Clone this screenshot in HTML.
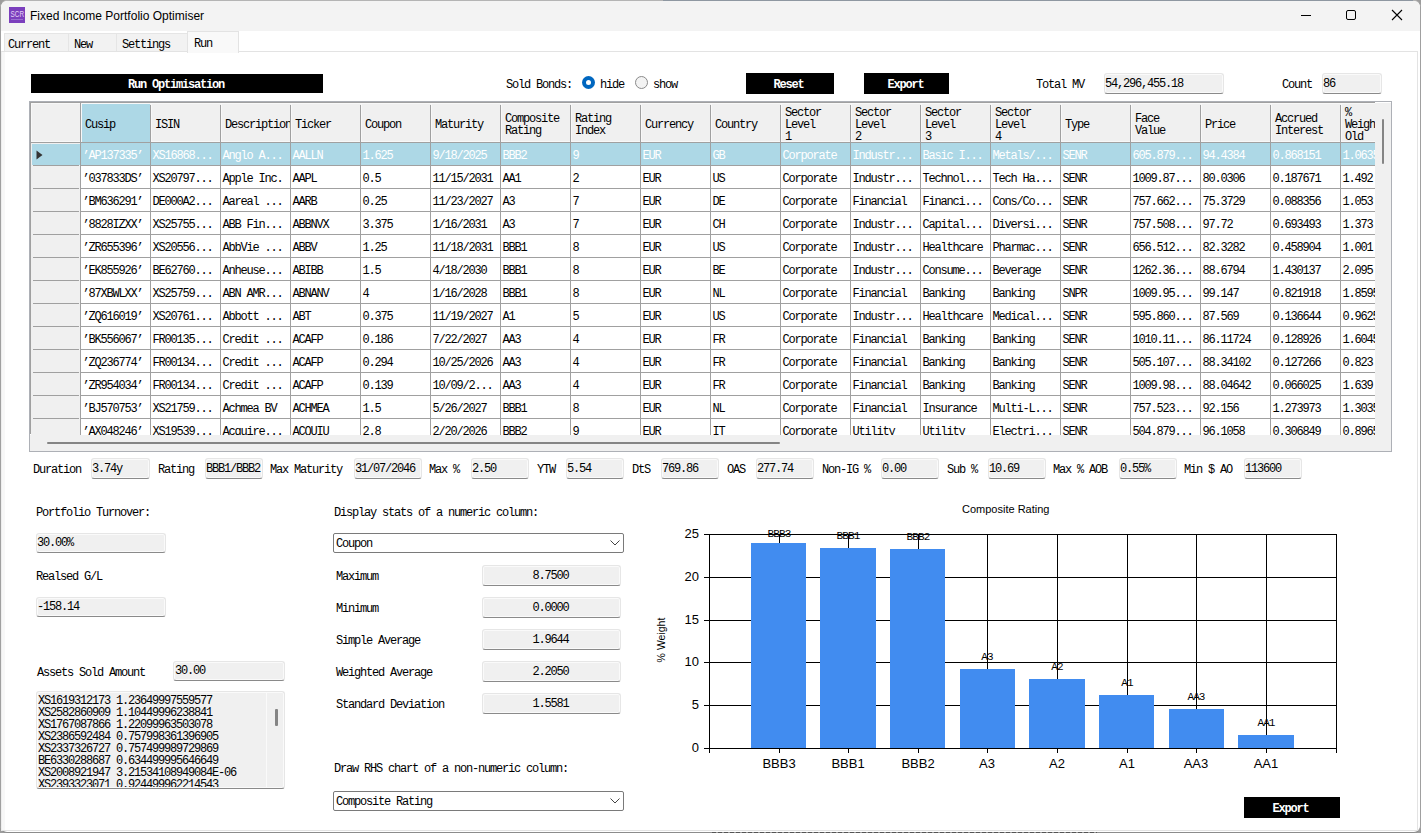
<!DOCTYPE html><html><head><meta charset='utf-8'><style>
*{box-sizing:border-box}
html,body{margin:0;padding:0}
body{width:1421px;height:833px;overflow:hidden;position:relative;background:#9c9c9c;font-family:'Liberation Mono', monospace;font-size:12px;color:#000}
.a{position:absolute}
.t{position:absolute;white-space:pre;font-family:'Liberation Mono', monospace;font-size:12px;letter-spacing:-1.2px;line-height:12px}
.s{position:absolute;white-space:pre;font-family:'Liberation Sans', sans-serif}
.btn{position:absolute;background:#000;color:#fff;font-family:'Liberation Mono', monospace;font-weight:bold;font-size:12px;letter-spacing:-1.2px;line-height:12px;text-align:center}
.tb{position:absolute;background:#f0f0f0;border:1px solid #e6e6e6;border-bottom:1px solid #8a8a8a;border-radius:3px;box-shadow:inset 0 0 0 1px #fafafa}
.gl{position:absolute;background:#a0a0a0}
</style></head><body>
<div class='a' style='left:0;top:0;width:1421px;height:833px;border:1px solid #a0a0a0;border-top-color:#b4b4b4;border-bottom-color:#8c8c8c;border-radius:7px;background:#fff;overflow:hidden'><div class='a' style='left:0;top:0;width:1419px;height:30px;background:#f3f3f3'></div></div>
<div class='a' style='left:663px;top:0;width:750px;height:1px;background:#8e97a1'></div>
<div class='a' style='left:9px;top:7px;width:16px;height:16px;background:#7b3fbd'></div>
<svg class='a' style='left:9px;top:7px' width='16' height='16'><text x='1.5' y='9.5' textLength='13.5' lengthAdjust='spacingAndGlyphs' font-family='Liberation Sans' font-size='9.5' fill='#e3d3f5'>SCR</text></svg>
<div class='a' style='left:11px;top:19px;width:12px;height:1px;background:#9a70d0'></div>
<div class='s' style='left:30px;top:9px;font-size:12px;line-height:14px'>Fixed Income Portfolio Optimiser</div>
<div class='a' style='left:1301px;top:15px;width:10px;height:1px;background:#000'></div>
<div class='a' style='left:1346px;top:10px;width:10px;height:10px;border:1px solid #000;border-radius:2px'></div>
<svg class='a' style='left:1391px;top:9px' width='12' height='12'><path d='M1 1L11 11M11 1L1 11' stroke='#000' stroke-width='1.1'/></svg>
<div class='a' style='left:4px;top:33px;width:65px;height:19px;background:#f2f2f2;border:1px solid #e5e5e5;border-bottom:none'></div>
<div class='t' style='left:8px;top:39px'>Current</div>
<div class='a' style='left:68px;top:33px;width:49px;height:19px;background:#f2f2f2;border:1px solid #e5e5e5;border-bottom:none'></div>
<div class='t' style='left:74px;top:39px'>New</div>
<div class='a' style='left:116px;top:33px;width:72px;height:19px;background:#f2f2f2;border:1px solid #e5e5e5;border-bottom:none'></div>
<div class='t' style='left:122px;top:39px'>Settings</div>
<div class='a' style='left:1px;top:51px;width:1417px;height:780px;border:1px solid #e3e3e3;border-left:1px solid #eeeeee'></div>
<div class='a' style='left:2px;top:52px;width:3px;height:778px;background:#f8f8f8'></div>
<div class='a' style='left:187px;top:31px;width:52px;height:22px;background:#f9f9f9;border:1px solid #e3e3e3;border-bottom:none'></div>
<div class='t' style='left:194px;top:38px'>Run</div>
<div class='btn' style='left:31px;top:74px;width:292px;height:19px;padding-top:5px;padding-right:2px'>Run Optimisation</div>
<div class='t' style='left:506px;top:79px'>Sold Bonds:</div>
<div class='a' style='left:582px;top:76px;width:13px;height:13px;border-radius:50%;background:#0067c0'></div>
<div class='a' style='left:586px;top:80px;width:5px;height:5px;border-radius:50%;background:#fff'></div>
<div class='t' style='left:600px;top:79px'>hide</div>
<div class='a' style='left:635px;top:76px;width:13px;height:13px;border-radius:50%;background:#f3f3f3;border:1px solid #8a8a8a'></div>
<div class='t' style='left:653px;top:79px'>show</div>
<div class='btn' style='left:746px;top:73px;width:88px;height:21px;padding-top:6px;padding-right:3px'>Reset</div>
<div class='btn' style='left:864px;top:73px;width:85px;height:21px;padding-top:6px;padding-right:2px'>Export</div>
<div class='t' style='left:1036px;top:79px'>Total MV</div>
<div class='tb' style='left:1104px;top:73px;width:120px;height:21px'></div>
<div class='t' style='left:1105px;top:78px'>54,296,455.18</div>
<div class='t' style='left:1282px;top:79px'>Count</div>
<div class='tb' style='left:1322px;top:73px;width:60px;height:21px'></div>
<div class='t' style='left:1323px;top:78px'>86</div>
<div class='a' style='left:29px;top:101px;width:1363px;height:351px;border:1px solid #adb0b6;background:#fff'></div>
<div class='gl' style='left:30px;top:102px;width:1345px;height:1px'></div>
<div class='gl' style='left:30px;top:102px;width:1px;height:332px'></div>
<div class='a' style='left:31px;top:103px;width:1344px;height:332px;overflow:hidden'>
<div class='a' style='left:0;top:0;width:1400px;height:39px;background:#f0f0f0'></div>
<div class='a' style='left:0px;top:39px;width:49px;height:300px;background:#f0f0f0'></div>
<div class='a' style='left:0px;top:0px;width:1400px;height:1px;background:#f8f8f8'></div>
<div class='a' style='left:0px;top:38px;width:1400px;height:1px;background:#f8f8f8'></div>
<div class='a' style='left:50px;top:0px;width:1px;height:39px;background:#f8f8f8'></div>
<div class='a' style='left:120px;top:0px;width:1px;height:39px;background:#f8f8f8'></div>
<div class='a' style='left:190px;top:0px;width:1px;height:39px;background:#f8f8f8'></div>
<div class='a' style='left:260px;top:0px;width:1px;height:39px;background:#f8f8f8'></div>
<div class='a' style='left:330px;top:0px;width:1px;height:39px;background:#f8f8f8'></div>
<div class='a' style='left:400px;top:0px;width:1px;height:39px;background:#f8f8f8'></div>
<div class='a' style='left:470px;top:0px;width:1px;height:39px;background:#f8f8f8'></div>
<div class='a' style='left:540px;top:0px;width:1px;height:39px;background:#f8f8f8'></div>
<div class='a' style='left:610px;top:0px;width:1px;height:39px;background:#f8f8f8'></div>
<div class='a' style='left:680px;top:0px;width:1px;height:39px;background:#f8f8f8'></div>
<div class='a' style='left:750px;top:0px;width:1px;height:39px;background:#f8f8f8'></div>
<div class='a' style='left:820px;top:0px;width:1px;height:39px;background:#f8f8f8'></div>
<div class='a' style='left:890px;top:0px;width:1px;height:39px;background:#f8f8f8'></div>
<div class='a' style='left:960px;top:0px;width:1px;height:39px;background:#f8f8f8'></div>
<div class='a' style='left:1030px;top:0px;width:1px;height:39px;background:#f8f8f8'></div>
<div class='a' style='left:1100px;top:0px;width:1px;height:39px;background:#f8f8f8'></div>
<div class='a' style='left:1170px;top:0px;width:1px;height:39px;background:#f8f8f8'></div>
<div class='a' style='left:1240px;top:0px;width:1px;height:39px;background:#f8f8f8'></div>
<div class='a' style='left:1310px;top:0px;width:1px;height:39px;background:#f8f8f8'></div>
<div class='a' style='left:1380px;top:0px;width:1px;height:39px;background:#f8f8f8'></div>
<div class='a' style='left:0px;top:0px;width:1px;height:39px;background:#f8f8f8'></div>
<div class='a' style='left:51px;top:1px;width:68px;height:38px;background:#add8e6'></div>
<div class='a' style='left:50px;top:40px;width:1400px;height:22px;background:#add8e6'></div>
<div class='a' style='left:1px;top:41px;width:48px;height:21px;background:#add8e6'></div>
<div class='gl' style='left:49px;top:0px;width:1px;height:39px'></div>
<div class='gl' style='left:119px;top:2px;width:1px;height:37px'></div>
<div class='gl' style='left:189px;top:2px;width:1px;height:37px'></div>
<div class='gl' style='left:259px;top:2px;width:1px;height:37px'></div>
<div class='gl' style='left:329px;top:2px;width:1px;height:37px'></div>
<div class='gl' style='left:399px;top:2px;width:1px;height:37px'></div>
<div class='gl' style='left:469px;top:2px;width:1px;height:37px'></div>
<div class='gl' style='left:539px;top:2px;width:1px;height:37px'></div>
<div class='gl' style='left:609px;top:2px;width:1px;height:37px'></div>
<div class='gl' style='left:679px;top:2px;width:1px;height:37px'></div>
<div class='gl' style='left:749px;top:2px;width:1px;height:37px'></div>
<div class='gl' style='left:819px;top:2px;width:1px;height:37px'></div>
<div class='gl' style='left:889px;top:2px;width:1px;height:37px'></div>
<div class='gl' style='left:959px;top:2px;width:1px;height:37px'></div>
<div class='gl' style='left:1029px;top:2px;width:1px;height:37px'></div>
<div class='gl' style='left:1099px;top:2px;width:1px;height:37px'></div>
<div class='gl' style='left:1169px;top:2px;width:1px;height:37px'></div>
<div class='gl' style='left:1239px;top:2px;width:1px;height:37px'></div>
<div class='gl' style='left:1309px;top:2px;width:1px;height:37px'></div>
<div class='gl' style='left:1379px;top:2px;width:1px;height:37px'></div>
<div class='gl' style='left:0px;top:39px;width:1400px;height:1px'></div>
<div class='gl' style='left:49px;top:39px;width:1px;height:300px'></div>
<div class='gl' style='left:119px;top:39px;width:1px;height:300px'></div>
<div class='gl' style='left:189px;top:39px;width:1px;height:300px'></div>
<div class='gl' style='left:259px;top:39px;width:1px;height:300px'></div>
<div class='gl' style='left:329px;top:39px;width:1px;height:300px'></div>
<div class='gl' style='left:399px;top:39px;width:1px;height:300px'></div>
<div class='gl' style='left:469px;top:39px;width:1px;height:300px'></div>
<div class='gl' style='left:539px;top:39px;width:1px;height:300px'></div>
<div class='gl' style='left:609px;top:39px;width:1px;height:300px'></div>
<div class='gl' style='left:679px;top:39px;width:1px;height:300px'></div>
<div class='gl' style='left:749px;top:39px;width:1px;height:300px'></div>
<div class='gl' style='left:819px;top:39px;width:1px;height:300px'></div>
<div class='gl' style='left:889px;top:39px;width:1px;height:300px'></div>
<div class='gl' style='left:959px;top:39px;width:1px;height:300px'></div>
<div class='gl' style='left:1029px;top:39px;width:1px;height:300px'></div>
<div class='gl' style='left:1099px;top:39px;width:1px;height:300px'></div>
<div class='gl' style='left:1169px;top:39px;width:1px;height:300px'></div>
<div class='gl' style='left:1239px;top:39px;width:1px;height:300px'></div>
<div class='gl' style='left:1309px;top:39px;width:1px;height:300px'></div>
<div class='gl' style='left:1379px;top:39px;width:1px;height:300px'></div>
<div class='gl' style='left:50px;top:62px;width:1400px;height:1px'></div>
<div class='gl' style='left:2px;top:62px;width:46px;height:1px'></div>
<div class='gl' style='left:50px;top:85px;width:1400px;height:1px'></div>
<div class='gl' style='left:2px;top:85px;width:46px;height:1px'></div>
<div class='gl' style='left:50px;top:108px;width:1400px;height:1px'></div>
<div class='gl' style='left:2px;top:108px;width:46px;height:1px'></div>
<div class='gl' style='left:50px;top:131px;width:1400px;height:1px'></div>
<div class='gl' style='left:2px;top:131px;width:46px;height:1px'></div>
<div class='gl' style='left:50px;top:154px;width:1400px;height:1px'></div>
<div class='gl' style='left:2px;top:154px;width:46px;height:1px'></div>
<div class='gl' style='left:50px;top:177px;width:1400px;height:1px'></div>
<div class='gl' style='left:2px;top:177px;width:46px;height:1px'></div>
<div class='gl' style='left:50px;top:200px;width:1400px;height:1px'></div>
<div class='gl' style='left:2px;top:200px;width:46px;height:1px'></div>
<div class='gl' style='left:50px;top:223px;width:1400px;height:1px'></div>
<div class='gl' style='left:2px;top:223px;width:46px;height:1px'></div>
<div class='gl' style='left:50px;top:246px;width:1400px;height:1px'></div>
<div class='gl' style='left:2px;top:246px;width:46px;height:1px'></div>
<div class='gl' style='left:50px;top:269px;width:1400px;height:1px'></div>
<div class='gl' style='left:2px;top:269px;width:46px;height:1px'></div>
<div class='gl' style='left:50px;top:292px;width:1400px;height:1px'></div>
<div class='gl' style='left:2px;top:292px;width:46px;height:1px'></div>
<div class='gl' style='left:50px;top:315px;width:1400px;height:1px'></div>
<div class='gl' style='left:2px;top:315px;width:46px;height:1px'></div>
<div class='gl' style='left:50px;top:338px;width:1400px;height:1px'></div>
<div class='gl' style='left:2px;top:338px;width:46px;height:1px'></div>
<svg class='a' style='left:5px;top:47px' width='8' height='11'><path d='M0.5 0.5L6.5 5L0.5 9.5Z' fill='#333' /></svg>
<div class='a' style='left:50px;top:14px;width:69px;height:40px;overflow:hidden'><div class='t' style='left:4px;top:2px'>Cusip</div></div>
<div class='a' style='left:120px;top:14px;width:69px;height:40px;overflow:hidden'><div class='t' style='left:4px;top:2px'>ISIN</div></div>
<div class='a' style='left:190px;top:14px;width:69px;height:40px;overflow:hidden'><div class='t' style='left:4px;top:2px'>Description</div></div>
<div class='a' style='left:260px;top:14px;width:69px;height:40px;overflow:hidden'><div class='t' style='left:4px;top:2px'>Ticker</div></div>
<div class='a' style='left:330px;top:14px;width:69px;height:40px;overflow:hidden'><div class='t' style='left:4px;top:2px'>Coupon</div></div>
<div class='a' style='left:400px;top:14px;width:69px;height:40px;overflow:hidden'><div class='t' style='left:4px;top:2px'>Maturity</div></div>
<div class='a' style='left:470px;top:8px;width:69px;height:40px;overflow:hidden'><div class='t' style='left:4px;top:2px'>Composite<br>Rating</div></div>
<div class='a' style='left:540px;top:8px;width:69px;height:40px;overflow:hidden'><div class='t' style='left:4px;top:2px'>Rating<br>Index</div></div>
<div class='a' style='left:610px;top:14px;width:69px;height:40px;overflow:hidden'><div class='t' style='left:4px;top:2px'>Currency</div></div>
<div class='a' style='left:680px;top:14px;width:69px;height:40px;overflow:hidden'><div class='t' style='left:4px;top:2px'>Country</div></div>
<div class='a' style='left:750px;top:2px;width:69px;height:40px;overflow:hidden'><div class='t' style='left:4px;top:2px'>Sector<br>Level<br>1</div></div>
<div class='a' style='left:820px;top:2px;width:69px;height:40px;overflow:hidden'><div class='t' style='left:4px;top:2px'>Sector<br>Level<br>2</div></div>
<div class='a' style='left:890px;top:2px;width:69px;height:40px;overflow:hidden'><div class='t' style='left:4px;top:2px'>Sector<br>Level<br>3</div></div>
<div class='a' style='left:960px;top:2px;width:69px;height:40px;overflow:hidden'><div class='t' style='left:4px;top:2px'>Sector<br>Level<br>4</div></div>
<div class='a' style='left:1030px;top:14px;width:69px;height:40px;overflow:hidden'><div class='t' style='left:4px;top:2px'>Type</div></div>
<div class='a' style='left:1100px;top:8px;width:69px;height:40px;overflow:hidden'><div class='t' style='left:4px;top:2px'>Face<br>Value</div></div>
<div class='a' style='left:1170px;top:14px;width:69px;height:40px;overflow:hidden'><div class='t' style='left:4px;top:2px'>Price</div></div>
<div class='a' style='left:1240px;top:8px;width:69px;height:40px;overflow:hidden'><div class='t' style='left:4px;top:2px'>Accrued<br>Interest</div></div>
<div class='a' style='left:1310px;top:2px;width:69px;height:40px;overflow:hidden'><div class='t' style='left:4px;top:2px'>%<br>Weight<br>Old</div></div>
<div class='t' style='left:51.5px;top:47px;color:#fff'>’AP137335’</div>
<div class='t' style='left:121.5px;top:47px;color:#fff'>XS16868...</div>
<div class='t' style='left:191.5px;top:47px;color:#fff'>Anglo A...</div>
<div class='t' style='left:261.5px;top:47px;color:#fff'>AALLN</div>
<div class='t' style='left:331.5px;top:47px;color:#fff'>1.625</div>
<div class='t' style='left:401.5px;top:47px;color:#fff'>9/18/2025</div>
<div class='t' style='left:471.5px;top:47px;color:#fff'>BBB2</div>
<div class='t' style='left:541.5px;top:47px;color:#fff'>9</div>
<div class='t' style='left:611.5px;top:47px;color:#fff'>EUR</div>
<div class='t' style='left:681.5px;top:47px;color:#fff'>GB</div>
<div class='t' style='left:751.5px;top:47px;color:#fff'>Corporate</div>
<div class='t' style='left:821.5px;top:47px;color:#fff'>Industr...</div>
<div class='t' style='left:891.5px;top:47px;color:#fff'>Basic I...</div>
<div class='t' style='left:961.5px;top:47px;color:#fff'>Metals/...</div>
<div class='t' style='left:1031.5px;top:47px;color:#fff'>SENR</div>
<div class='t' style='left:1101.5px;top:47px;color:#fff'>605.879...</div>
<div class='t' style='left:1171.5px;top:47px;color:#fff'>94.4384</div>
<div class='t' style='left:1241.5px;top:47px;color:#fff'>0.868151</div>
<div class='t' style='left:1311.5px;top:47px;color:#fff'>1.0635</div>
<div class='t' style='left:51.5px;top:70px;color:#000'>’037833DS’</div>
<div class='t' style='left:121.5px;top:70px;color:#000'>XS20797...</div>
<div class='t' style='left:191.5px;top:70px;color:#000'>Apple Inc.</div>
<div class='t' style='left:261.5px;top:70px;color:#000'>AAPL</div>
<div class='t' style='left:331.5px;top:70px;color:#000'>0.5</div>
<div class='t' style='left:401.5px;top:70px;color:#000'>11/15/2031</div>
<div class='t' style='left:471.5px;top:70px;color:#000'>AA1</div>
<div class='t' style='left:541.5px;top:70px;color:#000'>2</div>
<div class='t' style='left:611.5px;top:70px;color:#000'>EUR</div>
<div class='t' style='left:681.5px;top:70px;color:#000'>US</div>
<div class='t' style='left:751.5px;top:70px;color:#000'>Corporate</div>
<div class='t' style='left:821.5px;top:70px;color:#000'>Industr...</div>
<div class='t' style='left:891.5px;top:70px;color:#000'>Technol...</div>
<div class='t' style='left:961.5px;top:70px;color:#000'>Tech Ha...</div>
<div class='t' style='left:1031.5px;top:70px;color:#000'>SENR</div>
<div class='t' style='left:1101.5px;top:70px;color:#000'>1009.87...</div>
<div class='t' style='left:1171.5px;top:70px;color:#000'>80.0306</div>
<div class='t' style='left:1241.5px;top:70px;color:#000'>0.187671</div>
<div class='t' style='left:1311.5px;top:70px;color:#000'>1.492</div>
<div class='t' style='left:51.5px;top:93px;color:#000'>’BM636291’</div>
<div class='t' style='left:121.5px;top:93px;color:#000'>DE000A2...</div>
<div class='t' style='left:191.5px;top:93px;color:#000'>Aareal ...</div>
<div class='t' style='left:261.5px;top:93px;color:#000'>AARB</div>
<div class='t' style='left:331.5px;top:93px;color:#000'>0.25</div>
<div class='t' style='left:401.5px;top:93px;color:#000'>11/23/2027</div>
<div class='t' style='left:471.5px;top:93px;color:#000'>A3</div>
<div class='t' style='left:541.5px;top:93px;color:#000'>7</div>
<div class='t' style='left:611.5px;top:93px;color:#000'>EUR</div>
<div class='t' style='left:681.5px;top:93px;color:#000'>DE</div>
<div class='t' style='left:751.5px;top:93px;color:#000'>Corporate</div>
<div class='t' style='left:821.5px;top:93px;color:#000'>Financial</div>
<div class='t' style='left:891.5px;top:93px;color:#000'>Financi...</div>
<div class='t' style='left:961.5px;top:93px;color:#000'>Cons/Co...</div>
<div class='t' style='left:1031.5px;top:93px;color:#000'>SENR</div>
<div class='t' style='left:1101.5px;top:93px;color:#000'>757.662...</div>
<div class='t' style='left:1171.5px;top:93px;color:#000'>75.3729</div>
<div class='t' style='left:1241.5px;top:93px;color:#000'>0.088356</div>
<div class='t' style='left:1311.5px;top:93px;color:#000'>1.053</div>
<div class='t' style='left:51.5px;top:116px;color:#000'>’8828IZXX’</div>
<div class='t' style='left:121.5px;top:116px;color:#000'>XS25755...</div>
<div class='t' style='left:191.5px;top:116px;color:#000'>ABB Fin...</div>
<div class='t' style='left:261.5px;top:116px;color:#000'>ABBNVX</div>
<div class='t' style='left:331.5px;top:116px;color:#000'>3.375</div>
<div class='t' style='left:401.5px;top:116px;color:#000'>1/16/2031</div>
<div class='t' style='left:471.5px;top:116px;color:#000'>A3</div>
<div class='t' style='left:541.5px;top:116px;color:#000'>7</div>
<div class='t' style='left:611.5px;top:116px;color:#000'>EUR</div>
<div class='t' style='left:681.5px;top:116px;color:#000'>CH</div>
<div class='t' style='left:751.5px;top:116px;color:#000'>Corporate</div>
<div class='t' style='left:821.5px;top:116px;color:#000'>Industr...</div>
<div class='t' style='left:891.5px;top:116px;color:#000'>Capital...</div>
<div class='t' style='left:961.5px;top:116px;color:#000'>Diversi...</div>
<div class='t' style='left:1031.5px;top:116px;color:#000'>SENR</div>
<div class='t' style='left:1101.5px;top:116px;color:#000'>757.508...</div>
<div class='t' style='left:1171.5px;top:116px;color:#000'>97.72</div>
<div class='t' style='left:1241.5px;top:116px;color:#000'>0.693493</div>
<div class='t' style='left:1311.5px;top:116px;color:#000'>1.373</div>
<div class='t' style='left:51.5px;top:139px;color:#000'>’ZR655396’</div>
<div class='t' style='left:121.5px;top:139px;color:#000'>XS20556...</div>
<div class='t' style='left:191.5px;top:139px;color:#000'>AbbVie ...</div>
<div class='t' style='left:261.5px;top:139px;color:#000'>ABBV</div>
<div class='t' style='left:331.5px;top:139px;color:#000'>1.25</div>
<div class='t' style='left:401.5px;top:139px;color:#000'>11/18/2031</div>
<div class='t' style='left:471.5px;top:139px;color:#000'>BBB1</div>
<div class='t' style='left:541.5px;top:139px;color:#000'>8</div>
<div class='t' style='left:611.5px;top:139px;color:#000'>EUR</div>
<div class='t' style='left:681.5px;top:139px;color:#000'>US</div>
<div class='t' style='left:751.5px;top:139px;color:#000'>Corporate</div>
<div class='t' style='left:821.5px;top:139px;color:#000'>Industr...</div>
<div class='t' style='left:891.5px;top:139px;color:#000'>Healthcare</div>
<div class='t' style='left:961.5px;top:139px;color:#000'>Pharmac...</div>
<div class='t' style='left:1031.5px;top:139px;color:#000'>SENR</div>
<div class='t' style='left:1101.5px;top:139px;color:#000'>656.512...</div>
<div class='t' style='left:1171.5px;top:139px;color:#000'>82.3282</div>
<div class='t' style='left:1241.5px;top:139px;color:#000'>0.458904</div>
<div class='t' style='left:1311.5px;top:139px;color:#000'>1.001</div>
<div class='t' style='left:51.5px;top:162px;color:#000'>’EK855926’</div>
<div class='t' style='left:121.5px;top:162px;color:#000'>BE62760...</div>
<div class='t' style='left:191.5px;top:162px;color:#000'>Anheuse...</div>
<div class='t' style='left:261.5px;top:162px;color:#000'>ABIBB</div>
<div class='t' style='left:331.5px;top:162px;color:#000'>1.5</div>
<div class='t' style='left:401.5px;top:162px;color:#000'>4/18/2030</div>
<div class='t' style='left:471.5px;top:162px;color:#000'>BBB1</div>
<div class='t' style='left:541.5px;top:162px;color:#000'>8</div>
<div class='t' style='left:611.5px;top:162px;color:#000'>EUR</div>
<div class='t' style='left:681.5px;top:162px;color:#000'>BE</div>
<div class='t' style='left:751.5px;top:162px;color:#000'>Corporate</div>
<div class='t' style='left:821.5px;top:162px;color:#000'>Industr...</div>
<div class='t' style='left:891.5px;top:162px;color:#000'>Consume...</div>
<div class='t' style='left:961.5px;top:162px;color:#000'>Beverage</div>
<div class='t' style='left:1031.5px;top:162px;color:#000'>SENR</div>
<div class='t' style='left:1101.5px;top:162px;color:#000'>1262.36...</div>
<div class='t' style='left:1171.5px;top:162px;color:#000'>88.6794</div>
<div class='t' style='left:1241.5px;top:162px;color:#000'>1.430137</div>
<div class='t' style='left:1311.5px;top:162px;color:#000'>2.095</div>
<div class='t' style='left:51.5px;top:185px;color:#000'>’87XBWLXX’</div>
<div class='t' style='left:121.5px;top:185px;color:#000'>XS25759...</div>
<div class='t' style='left:191.5px;top:185px;color:#000'>ABN AMR...</div>
<div class='t' style='left:261.5px;top:185px;color:#000'>ABNANV</div>
<div class='t' style='left:331.5px;top:185px;color:#000'>4</div>
<div class='t' style='left:401.5px;top:185px;color:#000'>1/16/2028</div>
<div class='t' style='left:471.5px;top:185px;color:#000'>BBB1</div>
<div class='t' style='left:541.5px;top:185px;color:#000'>8</div>
<div class='t' style='left:611.5px;top:185px;color:#000'>EUR</div>
<div class='t' style='left:681.5px;top:185px;color:#000'>NL</div>
<div class='t' style='left:751.5px;top:185px;color:#000'>Corporate</div>
<div class='t' style='left:821.5px;top:185px;color:#000'>Financial</div>
<div class='t' style='left:891.5px;top:185px;color:#000'>Banking</div>
<div class='t' style='left:961.5px;top:185px;color:#000'>Banking</div>
<div class='t' style='left:1031.5px;top:185px;color:#000'>SNPR</div>
<div class='t' style='left:1101.5px;top:185px;color:#000'>1009.95...</div>
<div class='t' style='left:1171.5px;top:185px;color:#000'>99.147</div>
<div class='t' style='left:1241.5px;top:185px;color:#000'>0.821918</div>
<div class='t' style='left:1311.5px;top:185px;color:#000'>1.8595</div>
<div class='t' style='left:51.5px;top:208px;color:#000'>’ZQ616019’</div>
<div class='t' style='left:121.5px;top:208px;color:#000'>XS20761...</div>
<div class='t' style='left:191.5px;top:208px;color:#000'>Abbott ...</div>
<div class='t' style='left:261.5px;top:208px;color:#000'>ABT</div>
<div class='t' style='left:331.5px;top:208px;color:#000'>0.375</div>
<div class='t' style='left:401.5px;top:208px;color:#000'>11/19/2027</div>
<div class='t' style='left:471.5px;top:208px;color:#000'>A1</div>
<div class='t' style='left:541.5px;top:208px;color:#000'>5</div>
<div class='t' style='left:611.5px;top:208px;color:#000'>EUR</div>
<div class='t' style='left:681.5px;top:208px;color:#000'>US</div>
<div class='t' style='left:751.5px;top:208px;color:#000'>Corporate</div>
<div class='t' style='left:821.5px;top:208px;color:#000'>Industr...</div>
<div class='t' style='left:891.5px;top:208px;color:#000'>Healthcare</div>
<div class='t' style='left:961.5px;top:208px;color:#000'>Medical...</div>
<div class='t' style='left:1031.5px;top:208px;color:#000'>SENR</div>
<div class='t' style='left:1101.5px;top:208px;color:#000'>595.860...</div>
<div class='t' style='left:1171.5px;top:208px;color:#000'>87.569</div>
<div class='t' style='left:1241.5px;top:208px;color:#000'>0.136644</div>
<div class='t' style='left:1311.5px;top:208px;color:#000'>0.9625</div>
<div class='t' style='left:51.5px;top:231px;color:#000'>’BK556067’</div>
<div class='t' style='left:121.5px;top:231px;color:#000'>FR00135...</div>
<div class='t' style='left:191.5px;top:231px;color:#000'>Credit ...</div>
<div class='t' style='left:261.5px;top:231px;color:#000'>ACAFP</div>
<div class='t' style='left:331.5px;top:231px;color:#000'>0.186</div>
<div class='t' style='left:401.5px;top:231px;color:#000'>7/22/2027</div>
<div class='t' style='left:471.5px;top:231px;color:#000'>AA3</div>
<div class='t' style='left:541.5px;top:231px;color:#000'>4</div>
<div class='t' style='left:611.5px;top:231px;color:#000'>EUR</div>
<div class='t' style='left:681.5px;top:231px;color:#000'>FR</div>
<div class='t' style='left:751.5px;top:231px;color:#000'>Corporate</div>
<div class='t' style='left:821.5px;top:231px;color:#000'>Financial</div>
<div class='t' style='left:891.5px;top:231px;color:#000'>Banking</div>
<div class='t' style='left:961.5px;top:231px;color:#000'>Banking</div>
<div class='t' style='left:1031.5px;top:231px;color:#000'>SENR</div>
<div class='t' style='left:1101.5px;top:231px;color:#000'>1010.11...</div>
<div class='t' style='left:1171.5px;top:231px;color:#000'>86.11724</div>
<div class='t' style='left:1241.5px;top:231px;color:#000'>0.128926</div>
<div class='t' style='left:1311.5px;top:231px;color:#000'>1.6045</div>
<div class='t' style='left:51.5px;top:254px;color:#000'>’ZQ236774’</div>
<div class='t' style='left:121.5px;top:254px;color:#000'>FR00134...</div>
<div class='t' style='left:191.5px;top:254px;color:#000'>Credit ...</div>
<div class='t' style='left:261.5px;top:254px;color:#000'>ACAFP</div>
<div class='t' style='left:331.5px;top:254px;color:#000'>0.294</div>
<div class='t' style='left:401.5px;top:254px;color:#000'>10/25/2026</div>
<div class='t' style='left:471.5px;top:254px;color:#000'>AA3</div>
<div class='t' style='left:541.5px;top:254px;color:#000'>4</div>
<div class='t' style='left:611.5px;top:254px;color:#000'>EUR</div>
<div class='t' style='left:681.5px;top:254px;color:#000'>FR</div>
<div class='t' style='left:751.5px;top:254px;color:#000'>Corporate</div>
<div class='t' style='left:821.5px;top:254px;color:#000'>Financial</div>
<div class='t' style='left:891.5px;top:254px;color:#000'>Banking</div>
<div class='t' style='left:961.5px;top:254px;color:#000'>Banking</div>
<div class='t' style='left:1031.5px;top:254px;color:#000'>SENR</div>
<div class='t' style='left:1101.5px;top:254px;color:#000'>505.107...</div>
<div class='t' style='left:1171.5px;top:254px;color:#000'>88.34102</div>
<div class='t' style='left:1241.5px;top:254px;color:#000'>0.127266</div>
<div class='t' style='left:1311.5px;top:254px;color:#000'>0.823</div>
<div class='t' style='left:51.5px;top:277px;color:#000'>’ZR954034’</div>
<div class='t' style='left:121.5px;top:277px;color:#000'>FR00134...</div>
<div class='t' style='left:191.5px;top:277px;color:#000'>Credit ...</div>
<div class='t' style='left:261.5px;top:277px;color:#000'>ACAFP</div>
<div class='t' style='left:331.5px;top:277px;color:#000'>0.139</div>
<div class='t' style='left:401.5px;top:277px;color:#000'>10/09/2...</div>
<div class='t' style='left:471.5px;top:277px;color:#000'>AA3</div>
<div class='t' style='left:541.5px;top:277px;color:#000'>4</div>
<div class='t' style='left:611.5px;top:277px;color:#000'>EUR</div>
<div class='t' style='left:681.5px;top:277px;color:#000'>FR</div>
<div class='t' style='left:751.5px;top:277px;color:#000'>Corporate</div>
<div class='t' style='left:821.5px;top:277px;color:#000'>Financial</div>
<div class='t' style='left:891.5px;top:277px;color:#000'>Banking</div>
<div class='t' style='left:961.5px;top:277px;color:#000'>Banking</div>
<div class='t' style='left:1031.5px;top:277px;color:#000'>SENR</div>
<div class='t' style='left:1101.5px;top:277px;color:#000'>1009.98...</div>
<div class='t' style='left:1171.5px;top:277px;color:#000'>88.04642</div>
<div class='t' style='left:1241.5px;top:277px;color:#000'>0.066025</div>
<div class='t' style='left:1311.5px;top:277px;color:#000'>1.639</div>
<div class='t' style='left:51.5px;top:300px;color:#000'>’BJ570753’</div>
<div class='t' style='left:121.5px;top:300px;color:#000'>XS21759...</div>
<div class='t' style='left:191.5px;top:300px;color:#000'>Achmea BV</div>
<div class='t' style='left:261.5px;top:300px;color:#000'>ACHMEA</div>
<div class='t' style='left:331.5px;top:300px;color:#000'>1.5</div>
<div class='t' style='left:401.5px;top:300px;color:#000'>5/26/2027</div>
<div class='t' style='left:471.5px;top:300px;color:#000'>BBB1</div>
<div class='t' style='left:541.5px;top:300px;color:#000'>8</div>
<div class='t' style='left:611.5px;top:300px;color:#000'>EUR</div>
<div class='t' style='left:681.5px;top:300px;color:#000'>NL</div>
<div class='t' style='left:751.5px;top:300px;color:#000'>Corporate</div>
<div class='t' style='left:821.5px;top:300px;color:#000'>Financial</div>
<div class='t' style='left:891.5px;top:300px;color:#000'>Insurance</div>
<div class='t' style='left:961.5px;top:300px;color:#000'>Multi-L...</div>
<div class='t' style='left:1031.5px;top:300px;color:#000'>SENR</div>
<div class='t' style='left:1101.5px;top:300px;color:#000'>757.523...</div>
<div class='t' style='left:1171.5px;top:300px;color:#000'>92.156</div>
<div class='t' style='left:1241.5px;top:300px;color:#000'>1.273973</div>
<div class='t' style='left:1311.5px;top:300px;color:#000'>1.3035</div>
<div class='t' style='left:51.5px;top:323px;color:#000'>’AX048246’</div>
<div class='t' style='left:121.5px;top:323px;color:#000'>XS19539...</div>
<div class='t' style='left:191.5px;top:323px;color:#000'>Acquire...</div>
<div class='t' style='left:261.5px;top:323px;color:#000'>ACQUIU</div>
<div class='t' style='left:331.5px;top:323px;color:#000'>2.8</div>
<div class='t' style='left:401.5px;top:323px;color:#000'>2/20/2026</div>
<div class='t' style='left:471.5px;top:323px;color:#000'>BBB2</div>
<div class='t' style='left:541.5px;top:323px;color:#000'>9</div>
<div class='t' style='left:611.5px;top:323px;color:#000'>EUR</div>
<div class='t' style='left:681.5px;top:323px;color:#000'>IT</div>
<div class='t' style='left:751.5px;top:323px;color:#000'>Corporate</div>
<div class='t' style='left:821.5px;top:323px;color:#000'>Utility</div>
<div class='t' style='left:891.5px;top:323px;color:#000'>Utility</div>
<div class='t' style='left:961.5px;top:323px;color:#000'>Electri...</div>
<div class='t' style='left:1031.5px;top:323px;color:#000'>SENR</div>
<div class='t' style='left:1101.5px;top:323px;color:#000'>504.879...</div>
<div class='t' style='left:1171.5px;top:323px;color:#000'>96.1058</div>
<div class='t' style='left:1241.5px;top:323px;color:#000'>0.306849</div>
<div class='t' style='left:1311.5px;top:323px;color:#000'>0.8965</div>
</div>
<div class='a' style='left:1375px;top:103px;width:16px;height:348px;background:#f0f0f0'></div>
<div class='a' style='left:1382px;top:119px;width:2px;height:45px;background:#858585;border-radius:1px'></div>
<div class='a' style='left:30px;top:435px;width:1345px;height:16px;background:#f0f0f0'></div>
<div class='a' style='left:47px;top:442px;width:733px;height:2px;background:#858585;border-radius:1px'></div>
<div class='t' style='left:33px;top:464px'>Duration</div>
<div class='tb' style='left:91px;top:458px;width:59px;height:21px'></div>
<div class='t' style='left:92px;top:463px'>3.74y</div>
<div class='t' style='left:158px;top:464px'>Rating</div>
<div class='tb' style='left:205px;top:458px;width:58px;height:21px'></div>
<div class='t' style='left:206px;top:463px'>BBB1/BBB2</div>
<div class='t' style='left:270px;top:464px'>Max Maturity</div>
<div class='tb' style='left:354px;top:458px;width:68px;height:21px'></div>
<div class='t' style='left:355px;top:463px'>31/07/2046</div>
<div class='t' style='left:429px;top:464px'>Max %</div>
<div class='tb' style='left:471px;top:458px;width:58px;height:21px'></div>
<div class='t' style='left:472px;top:463px'>2.50</div>
<div class='t' style='left:537px;top:464px'>YTW</div>
<div class='tb' style='left:566px;top:458px;width:58px;height:21px'></div>
<div class='t' style='left:567px;top:463px'>5.54</div>
<div class='t' style='left:632px;top:464px'>DtS</div>
<div class='tb' style='left:661px;top:458px;width:58px;height:21px'></div>
<div class='t' style='left:662px;top:463px'>769.86</div>
<div class='t' style='left:727px;top:464px'>OAS</div>
<div class='tb' style='left:756px;top:458px;width:58px;height:21px'></div>
<div class='t' style='left:757px;top:463px'>277.74</div>
<div class='t' style='left:822px;top:464px'>Non-IG %</div>
<div class='tb' style='left:881px;top:458px;width:58px;height:21px'></div>
<div class='t' style='left:882px;top:463px'>0.00</div>
<div class='t' style='left:947px;top:464px'>Sub %</div>
<div class='tb' style='left:988px;top:458px;width:58px;height:21px'></div>
<div class='t' style='left:989px;top:463px'>10.69</div>
<div class='t' style='left:1053px;top:464px'>Max % AOB</div>
<div class='tb' style='left:1119px;top:458px;width:58px;height:21px'></div>
<div class='t' style='left:1120px;top:463px'>0.55%</div>
<div class='t' style='left:1184px;top:464px'>Min $ AO</div>
<div class='tb' style='left:1244px;top:458px;width:58px;height:21px'></div>
<div class='t' style='left:1245px;top:463px'>113600</div>
<div class='t' style='left:36px;top:507px'>Portfolio Turnover:</div>
<div class='tb' style='left:36px;top:533px;width:130px;height:20px'></div>
<div class='t' style='left:37px;top:537px'>30.00%</div>
<div class='t' style='left:36px;top:571px'>Realsed G/L</div>
<div class='tb' style='left:36px;top:597px;width:130px;height:20px'></div>
<div class='t' style='left:37px;top:601px'>-158.14</div>
<div class='t' style='left:37px;top:667px'>Assets Sold Amount</div>
<div class='tb' style='left:173px;top:661px;width:112px;height:20px'></div>
<div class='t' style='left:175px;top:665px'>30.00</div>
<div class='tb' style='left:36px;top:691px;width:249px;height:98px;overflow:hidden'><div class='a' style='left:229px;top:0;width:1px;height:96px;background:#fafafa'></div><div class='a' style='left:238px;top:17px;width:3px;height:17px;background:#858585;border-radius:1px'></div></div>
<div class='a' style='left:37px;top:692px;width:229px;height:95px;overflow:hidden'>
<div class='t' style='left:1px;top:3px'>XS1619312173 1.23649997559577</div>
<div class='t' style='left:1px;top:15px'>XS2582860909 1.10449996238841</div>
<div class='t' style='left:1px;top:27px'>XS1767087866 1.22099963503078</div>
<div class='t' style='left:1px;top:39px'>XS2386592484 0.757998361396905</div>
<div class='t' style='left:1px;top:51px'>XS2337326727 0.757499989729869</div>
<div class='t' style='left:1px;top:63px'>BE6330288687 0.634499995646649</div>
<div class='t' style='left:1px;top:75px'>XS2008921947 3.21534108949084E-06</div>
<div class='t' style='left:1px;top:87px'>XS2393323071 0.924499962214543</div>
</div>
<div class='t' style='left:334px;top:507px'>Display stats of a numeric column:</div>
<div class='a' style='left:333px;top:533px;width:291px;height:20px;background:#fff;border:1px solid #7a7a7a;border-radius:2px'></div>
<div class='t' style='left:336px;top:538px'>Coupon</div>
<svg class='a' style='left:610px;top:540px' width='10' height='6'><path d='M0.5 0.5L5 5L9.5 0.5' fill='none' stroke='#444' stroke-width='1'/></svg>
<div class='t' style='left:336px;top:571px'>Maximum</div>
<div class='tb' style='left:482px;top:565px;width:139px;height:21px'></div>
<div class='t' style='left:481px;top:570px;width:139px;text-align:center'>8.7500</div>
<div class='t' style='left:336px;top:603px'>Minimum</div>
<div class='tb' style='left:482px;top:597px;width:139px;height:21px'></div>
<div class='t' style='left:481px;top:602px;width:139px;text-align:center'>0.0000</div>
<div class='t' style='left:336px;top:635px'>Simple Average</div>
<div class='tb' style='left:482px;top:629px;width:139px;height:21px'></div>
<div class='t' style='left:481px;top:634px;width:139px;text-align:center'>1.9644</div>
<div class='t' style='left:336px;top:667px'>Weighted Average</div>
<div class='tb' style='left:482px;top:661px;width:139px;height:21px'></div>
<div class='t' style='left:481px;top:666px;width:139px;text-align:center'>2.2050</div>
<div class='t' style='left:336px;top:699px'>Standard Deviation</div>
<div class='tb' style='left:482px;top:693px;width:139px;height:21px'></div>
<div class='t' style='left:481px;top:698px;width:139px;text-align:center'>1.5581</div>
<div class='t' style='left:334px;top:763px'>Draw RHS chart of a non-numeric column:</div>
<div class='a' style='left:333px;top:791px;width:291px;height:20px;background:#fff;border:1px solid #7a7a7a;border-radius:2px'></div>
<div class='t' style='left:336px;top:796px'>Composite Rating</div>
<svg class='a' style='left:610px;top:798px' width='10' height='6'><path d='M0.5 0.5L5 5L9.5 0.5' fill='none' stroke='#444' stroke-width='1'/></svg>
<div class='s' style='left:962px;top:503px;font-size:11px;line-height:13px'>Composite Rating</div>
<div class='a' style='left:704px;top:534px;width:633px;height:1px;background:#000'></div>
<div class='s' style='left:600px;top:526px;width:99px;text-align:right;font-size:13px;line-height:15px'>25</div>
<div class='a' style='left:704px;top:577px;width:633px;height:1px;background:#000'></div>
<div class='s' style='left:600px;top:569px;width:99px;text-align:right;font-size:13px;line-height:15px'>20</div>
<div class='a' style='left:704px;top:620px;width:633px;height:1px;background:#000'></div>
<div class='s' style='left:600px;top:612px;width:99px;text-align:right;font-size:13px;line-height:15px'>15</div>
<div class='a' style='left:704px;top:662px;width:633px;height:1px;background:#000'></div>
<div class='s' style='left:600px;top:654px;width:99px;text-align:right;font-size:13px;line-height:15px'>10</div>
<div class='a' style='left:704px;top:705px;width:633px;height:1px;background:#000'></div>
<div class='s' style='left:600px;top:697px;width:99px;text-align:right;font-size:13px;line-height:15px'>5</div>
<div class='a' style='left:704px;top:748px;width:633px;height:1px;background:#000'></div>
<div class='s' style='left:600px;top:740px;width:99px;text-align:right;font-size:13px;line-height:15px'>0</div>
<div class='a' style='left:709px;top:534px;width:1px;height:219px;background:#000'></div>
<div class='a' style='left:1336px;top:534px;width:1px;height:219px;background:#000'></div>
<div class='a' style='left:779px;top:534px;width:1px;height:219px;background:#000'></div>
<div class='a' style='left:848px;top:534px;width:1px;height:219px;background:#000'></div>
<div class='a' style='left:918px;top:534px;width:1px;height:219px;background:#000'></div>
<div class='a' style='left:987px;top:534px;width:1px;height:219px;background:#000'></div>
<div class='a' style='left:1057px;top:534px;width:1px;height:219px;background:#000'></div>
<div class='a' style='left:1127px;top:534px;width:1px;height:219px;background:#000'></div>
<div class='a' style='left:1196px;top:534px;width:1px;height:219px;background:#000'></div>
<div class='a' style='left:1266px;top:534px;width:1px;height:219px;background:#000'></div>
<div class='a' style='left:751px;top:543px;width:55px;height:205px;background:#418cf0'></div>
<div class='a' style='left:779px;top:538px;width:1px;height:5px;background:#000'></div>
<div class='t' style='left:739px;top:528px;width:80px;text-align:center;font-size:11px;letter-spacing:-0.9px'>BBB3</div>
<div class='s' style='left:739px;top:756px;width:80px;text-align:center;font-size:13px;line-height:15px'>BBB3</div>
<div class='a' style='left:820px;top:548px;width:56px;height:200px;background:#418cf0'></div>
<div class='a' style='left:848px;top:543px;width:1px;height:5px;background:#000'></div>
<div class='t' style='left:808px;top:530px;width:80px;text-align:center;font-size:11px;letter-spacing:-0.9px'>BBB1</div>
<div class='s' style='left:808px;top:756px;width:80px;text-align:center;font-size:13px;line-height:15px'>BBB1</div>
<div class='a' style='left:890px;top:549px;width:55px;height:199px;background:#418cf0'></div>
<div class='a' style='left:918px;top:544px;width:1px;height:5px;background:#000'></div>
<div class='t' style='left:878px;top:531px;width:80px;text-align:center;font-size:11px;letter-spacing:-0.9px'>BBB2</div>
<div class='s' style='left:878px;top:756px;width:80px;text-align:center;font-size:13px;line-height:15px'>BBB2</div>
<div class='a' style='left:960px;top:669px;width:55px;height:79px;background:#418cf0'></div>
<div class='a' style='left:987px;top:664px;width:1px;height:5px;background:#000'></div>
<div class='t' style='left:947px;top:651px;width:80px;text-align:center;font-size:11px;letter-spacing:-0.9px'>A3</div>
<div class='s' style='left:947px;top:756px;width:80px;text-align:center;font-size:13px;line-height:15px'>A3</div>
<div class='a' style='left:1029px;top:679px;width:56px;height:69px;background:#418cf0'></div>
<div class='a' style='left:1057px;top:674px;width:1px;height:5px;background:#000'></div>
<div class='t' style='left:1017px;top:661px;width:80px;text-align:center;font-size:11px;letter-spacing:-0.9px'>A2</div>
<div class='s' style='left:1017px;top:756px;width:80px;text-align:center;font-size:13px;line-height:15px'>A2</div>
<div class='a' style='left:1099px;top:695px;width:55px;height:53px;background:#418cf0'></div>
<div class='a' style='left:1127px;top:690px;width:1px;height:5px;background:#000'></div>
<div class='t' style='left:1087px;top:677px;width:80px;text-align:center;font-size:11px;letter-spacing:-0.9px'>A1</div>
<div class='s' style='left:1087px;top:756px;width:80px;text-align:center;font-size:13px;line-height:15px'>A1</div>
<div class='a' style='left:1169px;top:709px;width:55px;height:39px;background:#418cf0'></div>
<div class='a' style='left:1196px;top:704px;width:1px;height:5px;background:#000'></div>
<div class='t' style='left:1156px;top:691px;width:80px;text-align:center;font-size:11px;letter-spacing:-0.9px'>AA3</div>
<div class='s' style='left:1156px;top:756px;width:80px;text-align:center;font-size:13px;line-height:15px'>AA3</div>
<div class='a' style='left:1238px;top:735px;width:56px;height:13px;background:#418cf0'></div>
<div class='a' style='left:1266px;top:730px;width:1px;height:5px;background:#000'></div>
<div class='t' style='left:1226px;top:717px;width:80px;text-align:center;font-size:11px;letter-spacing:-0.9px'>AA1</div>
<div class='s' style='left:1226px;top:756px;width:80px;text-align:center;font-size:13px;line-height:15px'>AA1</div>
<div class='a' style='left:709px;top:748px;width:628px;height:1px;background:#000'></div>
<div class='s' style='left:631px;top:634px;width:60px;text-align:center;font-size:10.5px;line-height:12px;transform:rotate(-90deg)'>% Weight</div>
<div class='btn' style='left:1244px;top:797px;width:96px;height:21px;padding-top:6px;padding-right:3px'>Export</div>
<div class='a' style='left:712px;top:832px;width:385px;height:1px;background:repeating-linear-gradient(90deg,#555 0 4px,#9a9a9a 4px 6px)'></div>
</body></html>
